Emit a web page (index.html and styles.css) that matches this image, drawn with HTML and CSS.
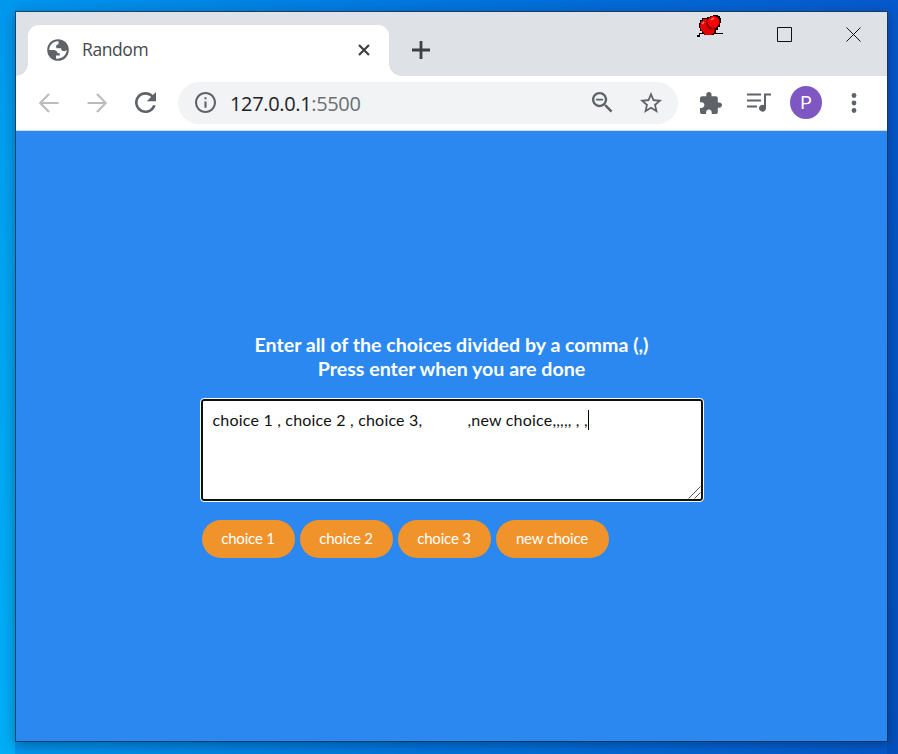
FILE: index.html
```
<!DOCTYPE html>
<html lang="en">
<head>
<meta charset="utf-8">
<title>Random</title>
<link rel="stylesheet" href="styles.css">
</head>
<body>
<div class="window">
  <header class="tabs">
    <div class="tab">
      <svg class="globe" viewBox="0 0 22 22"><circle cx="11" cy="11" r="10.8" fill="#5f6368"/><path d="M11.5 2.3C6 2 2.2 6.3 2.3 11h4.2c2.200 0 4 1.300 4.200 3.300h2.100v2.200H9v2.900c5.500 1.300 10.500-3 10.700-8.300-.8 1-2.200 1.400-3.700 1-1.500-.3-2-1.700-1.800-2.900H9.600C8.500 7.200 9 5.500 11.500 5.200z" fill="#fff"/></svg>
      <span class="tab-title">Random</span>
      <svg class="tab-close" viewBox="0 0 14 14"><path d="M2 2l10 10M12 2L2 12"/></svg>
    </div>
    <svg class="plus" viewBox="0 0 20 20"><path d="M10 1v18M1 10h18"/></svg>
    <div class="caption">
      <svg class="pin" viewBox="0 0 26 23"><path d="M0 20h2v-2h3v-2h2v3H3v3H0zM16 18h10v1H16z"/><path d="M10 2h3V1h3V0h5v1h2v2h1v5h-1v4h-2v3h-2v3h-2v2H7v-2H5v-2H3v-3H2V8h1V5h2V3h5z"/><path d="M4 6h2V4h4l1 1-1 4 2 4 4 2h2l-1 3-3 2H8l-2-3-2-2-1-4z" fill="#e80000"/><path d="M10 4c-1 5 1 9 6 9l4-1-3 3h-4c-4-1-5-6-3-11" fill="#b00000"/><circle cx="16.500" cy="7" r="6" fill="#f00"/><path d="M14 5l3-2M5 9l2-2" stroke="#ff8080" stroke-width="1.500"/></svg>
      <svg class="max" viewBox="0 0 15 15"><path d="M.5.5h14v14H.5z"/></svg>
      <svg class="close" viewBox="0 0 15 15"><path d="M.5.5l14 14M14.500.5l-14 14"/></svg>
    </div>
  </header>
  <nav class="toolbar">
    <svg class="nav-icon off" viewBox="0 0 20 20"><path d="M19.500 10H2M10 1L1.200 10l8.800 9"/></svg>
    <svg class="nav-icon off" viewBox="0 0 20 20"><path d="M.5 10H18M10 1l8.800 9-8.800 9"/></svg>
    <svg class="reload" viewBox="4 4 16 16"><path d="M17.650 6.350C16.200 4.900 14.210 4 12 4c-4.420 0-7.990 3.580-7.990 8s3.570 8 7.990 8c3.730 0 6.840-2.550 7.730-6h-2.080c-.82 2.330-3.040 4-5.650 4-3.310 0-6-2.690-6-6s2.690-6 6-6c1.660 0 3.140.69 4.220 1.780L13 11h7V4l-2.350 2.350z"/></svg>
    <div class="address">
      <svg class="info" viewBox="2 2 20 20"><path d="M11 7h2v2h-2zm0 4h2v6h-2zm1-9C6.480 2 2 6.480 2 12s4.480 10 10 10 10-4.480 10-10S17.520 2 12 2zm0 18c-4.410 0-8-3.590-8-8s3.590-8 8-8 8 3.590 8 8-3.590 8-8 8z"/></svg>
      <span class="url">127.0.0.1<span class="port">:5500</span></span>
      <svg class="zoom" viewBox="3 3 18 18"><path d="M15.500 14h-.79l-.28-.27C15.410 12.590 16 11.110 16 9.500 16 5.910 13.090 3 9.500 3S3 5.910 3 9.500 5.910 16 9.500 16c1.610 0 3.090-.59 4.230-1.570l.27.28v.79l5 4.990L20.490 19l-4.990-5zm-6 0C7.010 14 5 11.990 5 9.500S7.010 5 9.500 5 14 7.010 14 9.500 11.990 14 9.500 14zM6.500 8.800h6v1.400h-6z"/></svg>
      <svg class="star" viewBox="2 2 20 19"><path d="M22 9.240l-7.190-.62L12 2 9.190 8.630 2 9.240l5.460 4.730L5.820 21 12 17.270 18.180 21l-1.630-7.030L22 9.240zM12 15.400l-3.760 2.270 1-4.280-3.320-2.880 4.380-.38L12 6.100l1.710 4.040 4.380.38-3.320 2.880 1 4.280L12 15.400z"/></svg>
    </div>
    <svg class="puzzle" viewBox="2 1 21 21"><path d="M20.500 11H19V7c0-1.100-.9-2-2-2h-4V3.500C13 2.120 11.880 1 10.500 1S8 2.120 8 3.500V5H4c-1.100 0-1.990.9-1.990 2v3.800H3.500c1.490 0 2.700 1.210 2.700 2.700s-1.210 2.700-2.700 2.700H2V20c0 1.100.9 2 2 2h3.800v-1.500c0-1.490 1.210-2.700 2.700-2.700 1.490 0 2.700 1.210 2.700 2.700V22H17c1.100 0 2-.9 2-2v-4h1.500c1.380 0 2.500-1.120 2.500-2.500S21.880 11 20.500 11z"/></svg>
    <svg class="queue" viewBox="0 0 24 19"><path d="M0 .5h14v2H0zM0 6.500h14v2H0zM0 12.500h10v2H0zM17 .5h7v2h-5V15a3.500 3.500 0 1 1-2-3z"/></svg>
    <div class="avatar">P</div>
    <svg class="dots" viewBox="0 0 6 20"><circle cx="3" cy="2.500" r="2.400"/><circle cx="3" cy="10" r="2.400"/><circle cx="3" cy="17.500" r="2.400"/></svg>
  </nav>
  <main class="page">
    <div class="container">
      <h1>Enter all of the choices divided by a comma (,)<br>Press enter when you are done</h1>
      <div class="entry"><span class="entry-a">choice 1 , choice 2 , choice 3,</span><span class="entry-b">,new choice,,,,, , ,</span><span class="caret"></span>
        <svg class="grip" viewBox="0 0 13 13"><path d="M.5 12.500l12-12M6.500 12.500l6-6"/></svg>
      </div>
      <div class="tags"><span class="tag">choice 1</span><span class="tag">choice 2</span><span class="tag">choice 3</span><span class="tag wide">new choice</span></div>
    </div>
  </main>
</div>
</body>
</html>
```
FILE: styles.css
```
* { box-sizing: border-box; }
body {
  margin: 0;
  width: 898px;
  height: 754px;
  overflow: hidden;
  padding: 11px 10px 12px 15px;
  background:
    linear-gradient(#0098ee, #00a4f2 35%, #00aef6) 0 0 / 15px 100% no-repeat,
    linear-gradient(#0659cc, #0450bd) 100% 0 / 11px 100% no-repeat,
    linear-gradient(90deg, #0098ee, #0078df 45%, #0659cc);
  font-family: "Open Sans", sans-serif;
}
svg { display: block; flex: none; fill: #5f6368; }
.window {
  width: 873px;
  height: 731px;
  border: 1px solid rgba(30, 50, 70, .75);
  background: #fff;
  background-clip: padding-box;
  box-shadow: 0 3px 12px rgba(0, 20, 50, .4);
}
.tabs { height: 64px; background: #dee1e6; display: flex; padding: 13px 0 0 12px; }
.tab {
  position: relative;
  width: 361px;
  height: 51px;
  background: #fff;
  border-radius: 11px 11px 0 0;
  display: flex;
  align-items: center;
  padding: 0 18px 2px 19px;
}
.tab::before, .tab::after {
  content: "";
  position: absolute;
  bottom: 0;
  width: 12px;
  height: 12px;
}
.tab::before { left: -12px; background: radial-gradient(circle at 0 0, transparent 11.500px, #fff 12px); }
.tab::after { right: -12px; background: radial-gradient(circle at 100% 0, transparent 11.500px, #fff 12px); }
.globe { width: 22px; height: 22px; }
.tab-title { margin-left: 13px; padding-bottom: 2px; flex: 1; font-size: 17.500px; color: #45494d; letter-spacing: -.4px; }
.tab-close { width: 14px; height: 14px; stroke: #3c4043; stroke-width: 2.200; }
.plus { width: 20px; height: 20px; margin: 15px 0 0 22px; stroke: #3c4043; stroke-width: 2.800; }
.caption { display: flex; margin-left: auto; padding-right: 27px; }
.pin { width: 26px; height: 23px; margin-top: -10px; fill: #000; }
.max { width: 15px; height: 15px; margin: 2px 0 0 54px; fill: none; stroke: #111; }
.close { width: 15px; height: 15px; margin: 2px 0 0 54px; fill: none; stroke: #111; }
.caption { padding-right: 26px; }
.toolbar { height: 55px; display: flex; align-items: center; padding: 0 30px 1px 23px; border-bottom: 1px solid #d5d8dc; }
.nav-icon { width: 20px; height: 20px; margin-right: 28px; fill: none; stroke: #bbbcbe; stroke-width: 2.200; }
.reload { width: 21px; height: 21px; }
.address { width: 500px; height: 42px; flex: none; margin-left: 22px; padding: 0 16px 0 17px; border-radius: 21px; background: #f1f3f4; display: flex; align-items: center; }
.info { width: 21px; height: 21px; }
.url { flex: 1; margin-left: 14px; padding-top: 1px; font-size: 20px; color: #202124; letter-spacing: -.35px; }
.port { color: #6b6f73; }
.zoom { width: 21px; height: 21px; }
.star { width: 22px; height: 21px; margin-left: 27px; }
.puzzle { width: 22px; height: 22px; margin-left: 22px; }
.queue { width: 24px; height: 19px; margin-left: 25px; }
.avatar { width: 33px; height: 33px; margin-left: 19px; border-radius: 50%; background: #7e57c2; color: #fff; font: 18px/33px Roboto, sans-serif; text-align: center; }
.dots { width: 6px; height: 20px; margin-left: 29px; }
.page { height: 610px; background: #2b88f0; display: flex; justify-content: center; padding-top: 202px; }
.container { width: 500px; font-family: Lato, "Open Sans", sans-serif; }
h1 { margin: 0 0 18px; font-size: 19.600px; line-height: 24px; text-align: center; color: #fff; white-space: nowrap; }
.entry {
  position: relative;
  width: 502px;
  height: 102px;
  margin-left: -1px;
  padding: 9px 9px 9px 10px;
  display: flex;
  background: #fff;
  border: 2px solid #101010;
  border-radius: 3px;
  outline: 1px solid #fff;
  white-space: nowrap;
  font-size: 16px;
  letter-spacing: .2px;
  line-height: 20px;
  color: #111;
}
.entry-a { width: 255px; }
.caret { width: 1px; height: 20px; background: #000; }
.grip { position: absolute; right: 0; bottom: 0; width: 13px; height: 13px; fill: none; stroke: #555; }
.tags { display: flex; gap: 5px; margin-top: 19px; }
.tag { width: 93px; height: 38px; border-radius: 19px; background: #f0932b; color: #fff; font-size: 15px; letter-spacing: -.2px; line-height: 37px; text-align: center; white-space: nowrap; }
.wide { width: 113px; }
```
